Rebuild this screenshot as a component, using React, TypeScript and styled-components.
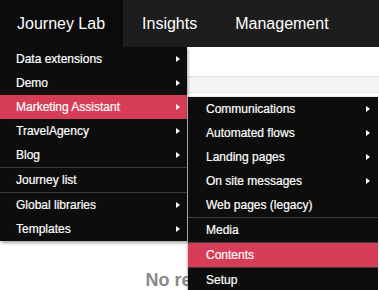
import styled, { createGlobalStyle } from 'styled-components';

const GlobalStyle = createGlobalStyle`
  html, body {
    margin: 0;
    padding: 0;
    background: #ffffff;
    font-family: "Liberation Sans", Arial, sans-serif;
    overflow: hidden;
  }
`;

const Shell = styled.div`
  position: relative;
  width: 379px;
  height: 290px;
  overflow: hidden;
`;

const NavBar = styled.nav`
  display: flex;
  height: 47px;
  background: #1d1d1d;
`;

const NavTab = styled.div<{ $active?: boolean, $first?: boolean }>`
  display: flex;
  align-items: center;
  padding: ${({ $first }) => ($first ? '0 18px 0 17px' : '0 19px')};
  font-size: 16px;
  color: #ffffff;
  background: ${({ $active }) => ($active ? '#0b0b0b' : 'transparent')};
`;

const Toolbar = styled.div`
  height: 29px;
`;

const FilterBand = styled.div`
  height: 15px;
  background: #f4f4f4;
  border-top: 1px solid #e3e3e3;
  border-bottom: 1px solid #e3e3e3;
`;

const EmptyText = styled.div`
  padding-top: 177px;
  text-align: center;
  font-size: 18px;
  font-weight: bold;
  color: #8a8a8a;
`;

const Menu = styled.ul`
  position: absolute;
  top: 47px;
  left: 0;
  width: 187px;
  margin: 0;
  padding: 0;
  list-style: none;
  background: #0d0d0d;
  box-shadow: 1px 2px 3px rgba(0, 0, 0, 0.35);
`;

const SubMenu = styled(Menu)`
  top: 2px;
  left: 188px;
  width: 190px;
  box-shadow: -1px 0 2px rgba(0, 0, 0, 0.25);
`;

const Item = styled.li<{ $active?: boolean, $divider?: boolean, $inset?: number }>`
  position: relative;
  display: flex;
  align-items: center;
  justify-content: space-between;
  box-sizing: border-box;
  height: ${({ $divider }) => ($divider ? '25px' : '24px')};
  padding: 0 7px 0 ${({ $inset }) => $inset ?? 16}px;
  font-size: 12px;
  color: #ffffff;
  -webkit-text-stroke: 0.2px #ffffff;
  white-space: nowrap;
  background: ${({ $active }) => ($active ? '#d63d57' : 'transparent')};
  border-top: ${({ $divider }) => ($divider ? '1px solid #3c3c3c' : 'none')};
`;

const SubItem = styled(Item)`
  padding-right: 8px;
`;

const Arrow = styled.span`
  width: 0;
  height: 0;
  border-left: 4px solid #ffffff;
  border-top: 3.5px solid transparent;
  border-bottom: 3.5px solid transparent;
`;

type Entry = { label: string, sub?: boolean, active?: boolean, divider?: boolean };

const marketing: Entry[] = [
  { label: 'Communications', sub: true },
  { label: 'Automated flows', sub: true },
  { label: 'Landing pages', sub: true },
  { label: 'On site messages', sub: true },
  { label: 'Web pages (legacy)' },
  { label: 'Media', divider: true },
  { label: 'Contents', divider: true, active: true },
  { label: 'Setup', divider: true },
];

const journeyLab: Entry[] = [
  { label: 'Data extensions', sub: true },
  { label: 'Demo', sub: true },
  { label: 'Marketing Assistant', sub: true, active: true },
  { label: 'TravelAgency', sub: true },
  { label: 'Blog', sub: true },
  { label: 'Journey list', divider: true },
  { label: 'Global libraries', sub: true, divider: true },
  { label: 'Templates', sub: true },
];

export default function App() {
  return (
    <Shell>
      <GlobalStyle />
      <NavBar>
        <NavTab $active $first>Journey Lab</NavTab>
        <NavTab>Insights</NavTab>
        <NavTab>Management</NavTab>
      </NavBar>
      <Toolbar />
      <FilterBand />
      <EmptyText>No results</EmptyText>

      <Menu>
        {journeyLab.map((entry) => (
          <Item key={entry.label} $active={entry.active} $divider={entry.divider}>
            {entry.label}
            {entry.sub && <Arrow />}
            {entry.label === 'Marketing Assistant' && (
              <SubMenu>
                {marketing.map((child) => (
                  <SubItem key={child.label} $active={child.active} $divider={child.divider} $inset={18}>
                    {child.label}
                    {child.sub && <Arrow />}
                  </SubItem>
                ))}
              </SubMenu>
            )}
          </Item>
        ))}
      </Menu>
    </Shell>
  );
}
